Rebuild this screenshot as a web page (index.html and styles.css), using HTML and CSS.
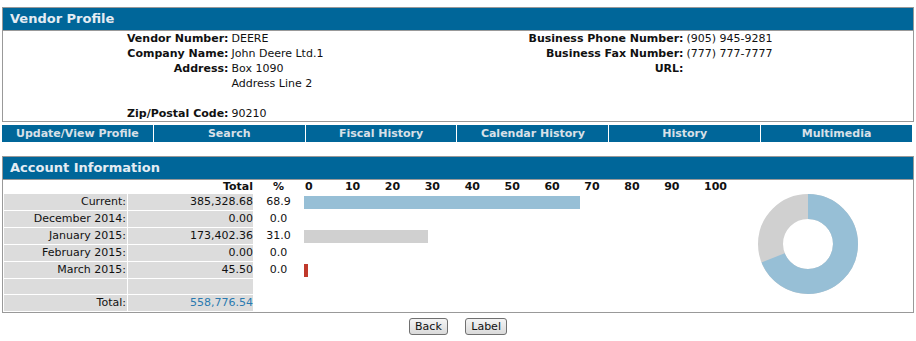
FILE: index.html
```html
<!DOCTYPE html>
<html lang="en">
<head>
    <meta charset="UTF-8">
    <title>Vendor Profile</title>
    <link rel="stylesheet" href="styles.css">
</head>
<body>
    <div class="panel">
        <div class="panel-title">Vendor Profile</div>
        <div class="profile">
            <div class="fields">
                <div class="label">Vendor Number:</div><div class="value">DEERE</div>
                <div class="label">Company Name:</div><div class="value">John Deere Ltd.1</div>
                <div class="label">Address:</div><div class="value">Box 1090</div>
                <div class="label"></div><div class="value">Address Line 2</div>
                <div class="label"></div><div class="value"></div>
                <div class="label">Zip/Postal Code:</div><div class="value">90210</div>
            </div>
            <div class="fields">
                <div class="label">Business Phone Number:</div><div class="value">(905) 945-9281</div>
                <div class="label">Business Fax Number:</div><div class="value">(777) 777-7777</div>
                <div class="label">URL:</div><div class="value"></div>
            </div>
        </div>
    </div>

    <div class="nav">
        <a href="#">Update/View Profile</a>
        <a href="#">Search</a>
        <a href="#">Fiscal History</a>
        <a href="#">Calendar History</a>
        <a href="#">History</a>
        <a href="#">Multimedia</a>
    </div>

    <div class="panel account">
        <div class="panel-title">Account Information</div>
        <table class="aging">
            <colgroup>
                <col class="col-name">
                <col class="col-amount">
                <col class="col-pct">
                <col class="col-chart">
                <col>
            </colgroup>
            <tr class="head">
                <td class="name"></td>
                <td class="amount">Total</td>
                <td class="pct">%</td>
                <td class="chart">
                    <div class="scale">
                        <span>0</span><span>10</span><span>20</span><span>30</span><span>40</span><span>50</span><span>60</span><span>70</span><span>80</span><span>90</span><span>100</span>
                    </div>
                </td>
                <td></td>
            </tr>
            <tr>
                <td class="name cell">Current:</td>
                <td class="amount cell">385,328.68</td>
                <td class="pct">68.9</td>
                <td class="chart"><div class="bar blue" style="width: 275.6px;"></div></td>
                <td class="donut" rowspan="7">
                    <svg width="100" height="100" viewBox="0 0 100 100">
                        <g transform="rotate(-90 50 50)" fill="none" stroke-width="25">
                            <circle cx="50" cy="50" r="37.5" stroke="#d0d0d0"/>
                            <circle cx="50" cy="50" r="37.5" stroke="#97bfd6" stroke-dasharray="162.3 235.6"/>
                        </g>
                    </svg>
                </td>
            </tr>
            <tr>
                <td class="name cell">December 2014:</td>
                <td class="amount cell">0.00</td>
                <td class="pct">0.0</td>
                <td class="chart"></td>
            </tr>
            <tr>
                <td class="name cell">January 2015:</td>
                <td class="amount cell">173,402.36</td>
                <td class="pct">31.0</td>
                <td class="chart"><div class="bar grey" style="width: 124px;"></div></td>
            </tr>
            <tr>
                <td class="name cell">February 2015:</td>
                <td class="amount cell">0.00</td>
                <td class="pct">0.0</td>
                <td class="chart"></td>
            </tr>
            <tr>
                <td class="name cell">March 2015:</td>
                <td class="amount cell">45.50</td>
                <td class="pct">0.0</td>
                <td class="chart"><div class="bar red" style="width: 4px;"></div></td>
            </tr>
            <tr class="blank">
                <td class="name cell"></td>
                <td class="amount cell"></td>
                <td class="pct"></td>
                <td class="chart"></td>
            </tr>
            <tr class="total">
                <td class="name cell">Total:</td>
                <td class="amount cell"><a href="#">558,776.54</a></td>
                <td class="pct"></td>
                <td class="chart"></td>
            </tr>
        </table>
    </div>

    <div class="actions">
        <button class="btn">Back</button>
        <button class="btn">Label</button>
    </div>
</body>
</html>
```

FILE: styles.css
```css
* {
    box-sizing: border-box;
}
body {
    margin: 0;
    padding: 7px 2px 0;
    font-family: Verdana, 'DejaVu Sans', sans-serif;
    font-size: 11px;
    color: #111;
    background: #fff;
}
.panel {
    border: 1px solid #999;
}
.panel-title {
    background-color: #006699;
    color: #e4ecf3;
    font-weight: bold;
    font-size: 13px;
    height: 23px;
    line-height: 22px;
    padding: 0 7px;
    border-bottom: 1px solid #999;
}
.profile {
    display: grid;
    grid-template-columns: 1fr 1fr;
    height: 90px;
}
.fields {
    display: grid;
    grid-template-columns: 1fr 1fr;
    grid-auto-rows: 15px;
    align-content: start;
    line-height: 15px;
}
.fields .label {
    text-align: right;
    font-weight: bold;
    padding-right: 2px;
}
.fields .value {
    padding-left: 1px;
}
.nav {
    display: grid;
    grid-template-columns: repeat(6, 1fr);
    gap: 1px;
    margin: 3px 2px 0 0;
}
.nav a {
    display: block;
    background-color: #006699;
    color: #d8e0e8;
    font-weight: bold;
    text-align: center;
    text-decoration: none;
    height: 17px;
    line-height: 17px;
}
.account {
    margin-top: 14px;
}
.aging {
    border-collapse: separate;
    border-spacing: 1px;
    table-layout: fixed;
    width: 100%;
}
.col-name {
    width: 123px;
}
.col-amount {
    width: 125px;
}
.col-pct {
    width: 49px;
}
.col-chart {
    width: 440px;
}
.aging td {
    padding: 0;
    height: 16px;
    line-height: 16px;
    white-space: nowrap;
}
.aging .head td {
    height: 12px;
    line-height: 12px;
    font-weight: bold;
}
.aging .blank td {
    height: 15px;
}
.aging .total td {
    height: 14px;
    line-height: 16px;
}
.aging .name {
    text-align: right;
    padding-right: 1px;
}
.aging .amount {
    text-align: right;
}
.aging .cell {
    background-color: #dcdcdc;
}
.aging .pct {
    text-align: center;
}
.aging .total a {
    color: #2a7ab0;
    text-decoration: none;
}
.scale {
    display: flex;
    padding-left: 1px;
}
.scale span {
    width: 40px;
}
.bar {
    height: 13px;
}
.bar.blue {
    background-color: #97bfd6;
}
.bar.grey {
    background-color: #d0d0d0;
}
.bar.red {
    background-color: #c0392b;
}
.aging .donut {
    vertical-align: top;
    padding-left: 13px;
    line-height: 0;
}
.actions {
    text-align: center;
    margin-top: 5px;
}
.btn {
    font-family: Verdana, 'DejaVu Sans', sans-serif;
    font-size: 11px;
    color: #111;
    padding: 1px 5px;
    margin: 0 7px;
    border: 1px solid #707070;
    border-radius: 3px;
    background: linear-gradient(#f4f4f4, #dadada);
}
```
